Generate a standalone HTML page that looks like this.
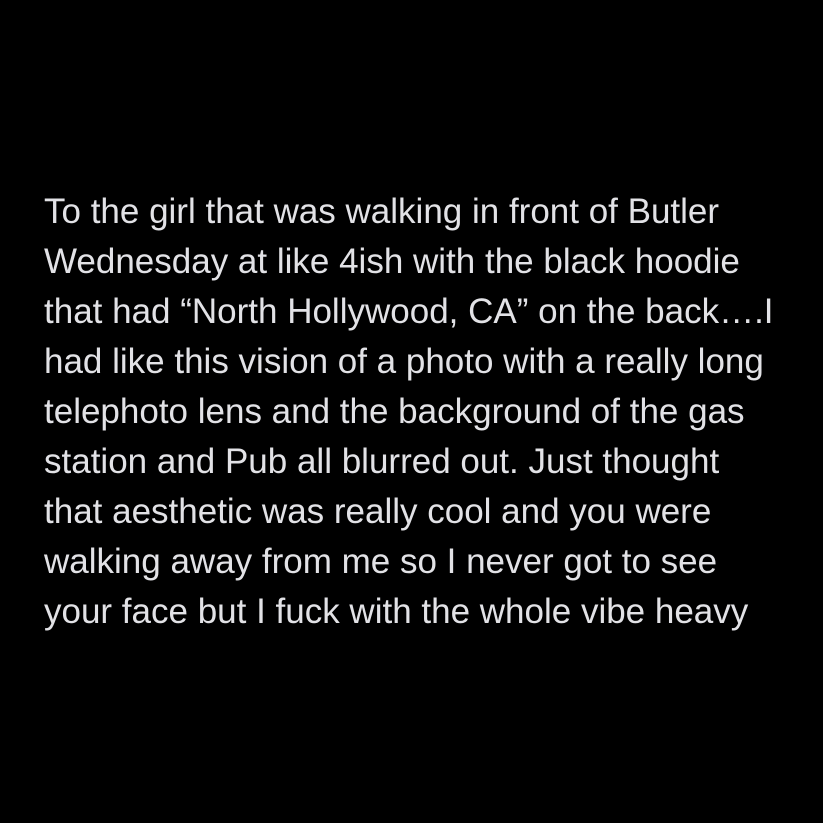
<!DOCTYPE html>
<html><head><meta charset="utf-8"><style>
html,body{margin:0;padding:0;background:#000;width:823px;height:823px;overflow:hidden}
.t{position:absolute;left:44px;top:187px;font-family:"Liberation Sans",Arial,sans-serif;font-size:35px;line-height:50px;color:#e2e2e6;white-space:nowrap}
</style></head><body>
<div class="t">To the girl that was walking in front of Butler<br>Wednesday at like 4ish with the black hoodie<br>that had “North Hollywood, CA” on the back….I<br>had like this vision of a photo with a really long<br>telephoto lens and the background of the gas<br>station and Pub all blurred out. Just thought<br>that aesthetic was really cool and you were<br>walking away from me so I never got to see<br>your face but I fuck with the whole vibe heavy</div>
</body></html>
